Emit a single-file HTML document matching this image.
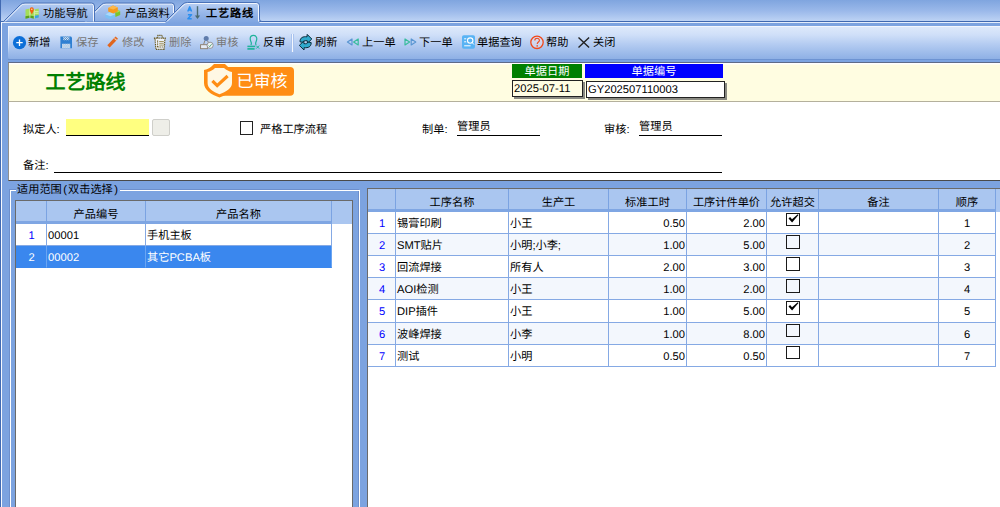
<!DOCTYPE html>
<html lang="zh-CN">
<head>
<meta charset="utf-8">
<title>工艺路线</title>
<style>
*{box-sizing:border-box;margin:0;padding:0}
html,body{width:1000px;height:507px;overflow:hidden}
body{text-rendering:geometricPrecision;position:relative;background:#7ca3e0;font-family:"Liberation Sans",sans-serif;font-size:11.2px;color:#000;line-height:1}
.abs{position:absolute}
#tabs{position:absolute;left:0;top:0;width:1000px;height:22px;background:linear-gradient(#7fa5df 0,#9bb9ea 50%,#c0d5f5 100%)}
#tabline{position:absolute;left:0;top:21px;width:1000px;height:1px;background:#3f68b0}
#tabline2{position:absolute;left:2px;top:22px;width:998px;height:1px;background:#e4edfb}
#leftedge{position:absolute;left:0;top:0;width:1px;height:507px;background:#416ab2}
#leftedge2{position:absolute;left:1px;top:22px;width:1px;height:485px;background:#f6f9fe}
.tabtxt{position:absolute;top:9px;white-space:nowrap}
#toolbar{position:absolute;left:8px;top:26px;width:992px;height:33px;background:linear-gradient(#dde9fb 0,#cfdff8 25%,#b3cbf1 55%,#8eb0e5 100%);border-top:1px solid #f2f6fd;border-radius:0 0 0 2px}
#tbleft{position:absolute;left:8px;top:26px;width:1px;height:28px;background:linear-gradient(#f2f6fd 0,#e6eefb 40%,rgba(200,216,245,0) 100%)}
#tbbot{position:absolute;left:8px;top:59px;width:992px;height:1px;background:#6d93d2}
.tb{position:absolute;top:38px;white-space:nowrap}
.tb.dis{color:#777}
#hdr{position:absolute;left:8px;top:61.500px;width:992px;height:40.300px;background:#fffde1;border-top:1px solid #5f6b88;border-left:1px solid #8f8f88;border-bottom:1.300px solid #b4b09c;box-shadow:inset 0 1.500px 0 #fff}
#title{position:absolute;left:45.500px;top:73px;font-family:"Liberation Serif",serif;font-weight:bold;font-size:20px;color:#008000;white-space:nowrap}
#form{position:absolute;left:8px;top:101.800px;width:992px;height:79.200px;background:#fff;border-left:1px solid #909090;border-bottom:1px solid #4a4a4a}
.lbl{position:absolute;white-space:nowrap}
.uline{position:absolute;height:1px;background:#000}
.grid{position:absolute;background:#fff;border:1px solid #6a6a6a;overflow:hidden}
.gh.f{border-bottom-color:#aac6f0;border-right:0}
.gh{position:absolute;top:0;background:#aac6f0;border-right:1px solid #7ba3e2;border-bottom:3px solid #7fa6e3;text-align:center;white-space:nowrap;overflow:hidden}
.c{position:absolute;height:22.130px;border-right:1px solid #85a9e4;border-bottom:1px solid #85a9e4;white-space:nowrap;overflow:hidden;padding:7px 0 0 1px}
.c.n{color:#00f;text-align:center;padding-left:1px}
.c.r{text-align:right;padding-right:1px}
.c.m{text-align:center;padding-left:0}
.cb{position:absolute;width:13.800px;height:13.600px;border:1.300px solid #1a1a1a}
</style>
</head>
<body>
<div id="tabs"></div>
<div id="tabline"></div><div id="tabline2"></div>
<svg class="abs" style="left:0;top:0" width="1000" height="24" viewBox="0 0 1000 24"><defs><linearGradient id="g1" x1="0" y1="0" x2="0" y2="1"><stop offset="0" stop-color="#b4ccf2"/><stop offset="1" stop-color="#8aade4"/></linearGradient><linearGradient id="g2" x1="0" y1="0" x2="0" y2="1"><stop offset="0" stop-color="#bad0f4"/><stop offset="0.45" stop-color="#9ab9ea"/><stop offset="1" stop-color="#7ca3e0"/></linearGradient></defs>
<path d="M84.5 21.5 L84.5 21.5 L101.5 4.5 Q103.0 3.0 106.0 3.0 L171.5 3.0 Q174.5 3.0 174.5 6.0 L174.5 21.5 Z" fill="url(#g1)"/><path d="M86.0 21.5 L102.0 5.5 Q103.2 4.0 106.0 4.0 L171.5 4.0 Q173.5 4.0 173.5 6.0 L173.5 21.5" fill="none" stroke="#f2f6fd" stroke-width="1"/><path d="M84.5 21.5 L101.5 4.5 Q103.0 3.0 106.0 3.0 L171.5 3.0 Q174.5 3.0 174.5 6.0 L174.5 21.5" fill="none" stroke="#4a72b8" stroke-width="1"/>
<path d="M3.5 21.5 L3.5 21.5 L20.5 4.5 Q22.0 3.0 25.0 3.0 L91.5 3.0 Q94.5 3.0 94.5 6.0 L94.5 21.5 Z" fill="url(#g1)"/><path d="M5.0 21.5 L21.0 5.5 Q22.2 4.0 25.0 4.0 L91.5 4.0 Q93.5 4.0 93.5 6.0 L93.5 21.5" fill="none" stroke="#f2f6fd" stroke-width="1"/><path d="M3.5 21.5 L20.5 4.5 Q22.0 3.0 25.0 3.0 L91.5 3.0 Q94.5 3.0 94.5 6.0 L94.5 21.5" fill="none" stroke="#4a72b8" stroke-width="1"/>
<path d="M165.5 23.5 L165.5 21.5 L183.0 4.0 Q184.5 2.5 187.5 2.5 L256.5 2.5 Q259.5 2.5 259.5 5.5 L259.5 23.5 Z" fill="url(#g2)"/><path d="M167.0 21.5 L183.5 5.0 Q184.7 3.5 187.5 3.5 L256.5 3.5 Q258.5 3.5 258.5 5.5 L258.5 21.5" fill="none" stroke="#f2f6fd" stroke-width="1"/><path d="M165.5 21.5 L183.0 4.0 Q184.5 2.5 187.5 2.5 L256.5 2.5 Q259.5 2.5 259.5 5.5 L259.5 19.0 Q259.5 21.5 262.0 21.5" fill="none" stroke="#4a72b8" stroke-width="1"/>
<path d="M25.5 9.6l4.4-1 4.4 1 4.4-1v9l-4.400 1-4.400-1-4.400 1z" fill="#a4de58"/><path d="M25.5 16.200l4.400-0.800 4.400 0.800v2.600l-4.400-1-4.400 1z" fill="#58a01e"/><path d="M34.300 15.800l4.400-0.800v2.600l-4.400 1z" fill="#3aa0e6"/><path d="M29.900 8.600v9.200M34.300 9.600v9" stroke="#e9f6d8" stroke-width="0.700" fill="none"/><path d="M34.600 11.600h4M34.600 13.200h4" stroke="#e9f6d8" stroke-width="0.700"/><path d="M31.800 14.400c-1-2.200-2-3.400-2-5a2 2.100 0 0 1 4 0c0 1.600-1 2.800-2 5z" fill="#f4600c"/><circle cx="31.800" cy="9.200" r="0.800" fill="#fbd9b8"/>
<path d="M105.200 14.200l5-2.200 5.200 2v3.800l-5 1.800-5.200-2z" fill="#7cc0f4"/><path d="M105.200 14.200l5.200 2 5-2-5.200-2.200z" fill="#a9d8fa"/><path d="M115.200 12.200l2.600-2.400 2.400 1.400v3.800l-4.800 2z" fill="#7cc42c"/><path d="M115.200 12.200l2.600-2.400 2.400 1.400-2.800 1.400z" fill="#a6e05a"/><path d="M108.200 8l4.800-2.400 4.800 2v4l-4.600 2-5-2.200z" fill="#f79a1c"/><path d="M108.200 8l4.800-2.400 4.800 2-4.600 1.800z" fill="#fdb84c"/>
<path d="M187.800 11.500L189.700 6.900L191.600 11.500M188.500 9.900h2.400" fill="none" stroke="#2b8ff0" stroke-width="1.500" stroke-linejoin="round"/><path d="M187.900 14.700h3.600l-3.600 4h3.800" fill="none" stroke="#2b8ff0" stroke-width="1.500" stroke-linejoin="round"/><path d="M197.500 6.200v10" stroke="#4a6a70" stroke-width="1.400"/><path d="M194.900 15.600h5.200l-2.600 3.400z" fill="#4a6a70"/>
</svg>
<div class="tabtxt" style="left:43px">功能导航</div>
<div class="tabtxt" style="left:125px">产品资料</div>
<div class="tabtxt" style="left:206px;font-weight:bold;letter-spacing:0.800px">工艺路线</div>

<div id="leftedge"></div><div id="leftedge2"></div>
<div id="toolbar"></div><div id="tbleft"></div><div id="tbbot"></div>
<svg class="abs" style="left:0;top:26px" width="640" height="33" viewBox="0 26 640 33">
<circle cx="19.5" cy="42.7" r="6.600" fill="#0d6fd8"/><path d="M19.500 39.500v6.400M16.300 42.700h6.400" stroke="#fff" stroke-width="1.300" fill="none"/>
<defs><pattern id="dt" width="1.860" height="1.860" patternUnits="userSpaceOnUse"><rect width="1.860" height="1.860" fill="#3a86d6"/><rect width="0.930" height="0.930" fill="#f4efe6"/><rect x="0.930" y="0.930" width="0.930" height="0.930" fill="#f4efe6"/></pattern></defs><path d="M60.400 36.600h10.600l1 1v10.600h-11.600z" fill="#2f80d2"/><rect x="63.200" y="36.600" width="6.200" height="3.600" fill="url(#dt)"/><rect x="62" y="43.800" width="8.200" height="4.400" fill="url(#dt)"/><rect x="62" y="43.800" width="8.200" height="4.400" fill="#fff" opacity="0.350"/>
<path d="M107.300 45.300l8.300-8.700 2.400 2.200-8.300 8.700z" fill="#e0661f"/><path d="M114.100 38.700l2.400 2.200 0.700-0.800-2.400-2.200z" fill="#f3cdb6"/>
<path d="M155 38.300l0.900 11h8.200l0.900-11z" fill="#eef2fa"/><path d="M153.900 38.200h12M157.300 38.200l0.600-2.800h4.200l0.600 2.800M155 38.600l0.900 10.700h8.200l0.900-10.700" fill="none" stroke="#66561c" stroke-width="1.200" stroke-dasharray="1.100 0.700"/><path d="M157.600 40.600v6.400h5.200" fill="none" stroke="#66561c" stroke-width="1.100" stroke-dasharray="1.100 0.700"/><path d="M159.200 41.500h4.600M159.200 43.300h4.600M159.200 45.100h4.600" stroke="#9a8c54" stroke-width="0.900"/>
<circle cx="206.200" cy="38.500" r="2.500" fill="#5f7cab"/><path d="M204.800 40.800L203.600 44.500M207.600 40.800L208.400 42.600" stroke="#8a7a66" stroke-width="0.900" fill="none"/><rect x="200.600" y="44.700" width="6.800" height="4" fill="#e4ebf7" stroke="#8a7a66" stroke-width="0.900"/><circle cx="210.100" cy="45.300" r="3.100" fill="#eef3f7" stroke="#8c8c8c" stroke-width="0.900"/><path d="M208.700 45.500l1 1.200 1.900-2.500" stroke="#4aa070" stroke-width="0.900" fill="none"/>
<path d="M250.800 45c1.800-1.800-0.600-3.400-0.600-6.200a3.300 3.400 0 0 1 6.600 0c0 2.800-2.400 4.400-0.600 6.200" fill="none" stroke="#1fb39a" stroke-width="1.200"/><path d="M247.400 46.400h7.800" stroke="#1fb39a" stroke-width="1.500"/><path d="M247.400 48.900h7.200" stroke="#1fb39a" stroke-width="1.700"/><path d="M256.200 45.600l3 3M259.200 45.600l-3 3" stroke="#1fb39a" stroke-width="1"/>
<rect x="291" y="34" width="1" height="18" fill="#a9c3ee"/><rect x="292" y="34" width="1" height="18" fill="#f3f7fe"/><rect x="293" y="34" width="1" height="18" fill="#a9c3ee"/>
<path d="M300 41.800C300 37.500 303 36.300 307 36.800L307.200 34.400L311.800 39L307.400 43.400L307.300 40.800C305 40.400 303.600 40.800 303.300 42.400Z" fill="#2fa9cc" stroke="#0c2c3c" stroke-width="1" stroke-linejoin="round"/><path d="M311.200 42.600C311.200 46.900 308.200 48.100 304.200 47.600L304 50L299.300 45.400L303.800 41L303.900 43.600C306.200 44 307.600 43.600 307.900 42Z" fill="#2fa9cc" stroke="#0c2c3c" stroke-width="1" stroke-linejoin="round"/>
<path d="M352 39v6l-4.600-3z" fill="none" stroke="#5a96d2" stroke-width="1.200" stroke-linejoin="round"/><path d="M358.200 39v6l-4.600-3z" fill="none" stroke="#38bc9c" stroke-width="1.200" stroke-linejoin="round"/>
<path d="M405 39v6l4.600-3z" fill="none" stroke="#38bc9c" stroke-width="1.200" stroke-linejoin="round"/><path d="M411.200 39v6l4.600-3z" fill="none" stroke="#5a96d2" stroke-width="1.200" stroke-linejoin="round"/>
<rect x="462" y="35.200" width="13" height="13.600" rx="1.800" fill="#58b3f4"/><circle cx="470.200" cy="40.600" r="2.700" fill="none" stroke="#fff" stroke-width="1.100"/><path d="M472.200 42.600l1.700 1.900M464.200 38.800h2M464.200 41.800h2M464.200 45.800h6.400" stroke="#fff" stroke-width="1"/>
<circle cx="537" cy="42.300" r="6.200" fill="#e9ddea" fill-opacity="0.500" stroke="#f0481a" stroke-width="1.300"/><path d="M534.800 40.600c0-3 4.600-3 4.600-0.200 0 1.600-2.200 1.600-2.200 3.600" fill="none" stroke="#f0481a" stroke-width="1.100"/><rect x="536.500" y="45.200" width="1.400" height="1.400" fill="#f0481a"/>
<path d="M578.500 37.600l10.600 10M589.100 37.600l-10.600 10" stroke="#222" stroke-width="1.400"/>
</svg>
<div class="tb" style="left:28px">新增</div>
<div class="tb dis" style="left:76px">保存</div>
<div class="tb dis" style="left:122px">修改</div>
<div class="tb dis" style="left:169px">删除</div>
<div class="tb dis" style="left:216px">审核</div>
<div class="tb" style="left:263px">反审</div>
<div class="tb" style="left:315px">刷新</div>
<div class="tb" style="left:362px">上一单</div>
<div class="tb" style="left:419px">下一单</div>
<div class="tb" style="left:477px">单据查询</div>
<div class="tb" style="left:546px">帮助</div>
<div class="tb" style="left:593px">关闭</div>

<div id="hdr"></div>
<div id="title">工艺路线</div>

<svg class="abs" style="left:200px;top:62px" width="100" height="38" viewBox="200 62 100 38">
<rect x="214" y="67" width="80" height="28.800" rx="4" fill="#ff8d14"/>
<path d="M214 64H225C228 67 231 69.500 235 70V83C235 90 228 94.500 219.500 97.500C211 94.500 204 90 204 83V70C208 69.500 211 67 214 64Z" fill="#ff8d14"/>
<path d="M215 68H224C226.500 70 229 71.500 232 72V83C232 88.500 226 91.800 219.500 94.200C213 91.800 207.600 88.500 207.600 83V72C210.500 71.500 213 70 215 68Z" fill="#fff8e4"/>
<path d="M212.400 80.800L217.200 85.600L227.600 76" fill="none" stroke="#ff8d14" stroke-width="3.200"/>
</svg>
<div class="abs" style="left:236.500px;top:72.500px;font-size:17px;color:#fff;white-space:nowrap;font-weight:normal">已审核</div>
<div class="abs" style="left:512px;top:64px;width:70px;height:14px;background:#008000;color:#fff;text-align:center;padding-top:3px">单据日期</div>
<div class="abs" style="left:585px;top:64px;width:138px;height:14px;background:#0000ff;color:#fff;text-align:center;padding-top:3px">单据编号</div>
<div class="abs" style="left:512px;top:80px;width:71px;height:16.500px;background:#fffde3;border:1px solid #222;box-shadow:2px 2px 0 #8a8a82;padding:3px 0 0 1px;white-space:nowrap">2025-07-11</div>
<div class="abs" style="left:586px;top:81px;width:139px;height:16.500px;background:#fff;border:1px solid #222;box-shadow:2px 2px 0 #8a8a82;padding:3px 0 0 1px;white-space:nowrap">GY202507110003</div>

<div id="form"></div>

<div class="lbl" style="left:23px;top:124.500px">拟定人:</div>
<div class="abs" style="left:66px;top:119.400px;width:82.800px;height:16px;background:#ffff80"></div>
<div class="uline" style="left:66px;top:135px;width:82.800px"></div>
<div class="abs" style="left:152.400px;top:118.500px;width:17.200px;height:17px;background:#eeeee8;border:1px solid #cfcfca;border-radius:2px"></div>
<div class="cb" style="left:239.500px;top:121.300px;width:13.800px;height:13.500px;border-width:1.200px;border-color:#222"></div>
<div class="lbl" style="left:260px;top:124.500px">严格工序流程</div>
<div class="lbl" style="left:422px;top:124.500px">制单:</div>
<div class="lbl" style="left:457px;top:122px">管理员</div>
<div class="uline" style="left:457px;top:135px;width:83px"></div>
<div class="lbl" style="left:604px;top:124.500px">审核:</div>
<div class="lbl" style="left:639px;top:122px">管理员</div>
<div class="uline" style="left:639px;top:135px;width:83px"></div>
<div class="lbl" style="left:23px;top:160.500px">备注:</div>
<div class="uline" style="left:54px;top:172px;width:668px"></div>


<div class="abs" style="left:9px;top:189px;width:350px;height:330px;border:1px solid #6d8fcc"></div>
<div class="abs" style="left:10px;top:190px;width:350px;height:330px;border:1px solid #fff"></div>
<div class="abs" style="left:16px;top:184.500px;height:12px;background:#7ca3e0;padding:0 2px 0 1px;white-space:nowrap">适用范围<span style="margin:0 1px 0 1.500px">(</span>双击选择<span style="margin-left:1.500px">)</span></div>
<div class="grid" id="lg" style="left:15px;top:200px;width:338px;height:320px">
<div class="gh" style="left:0px;width:31px;height:23px;padding-top:8.5px"></div>
<div class="gh" style="left:31px;width:99px;height:23px;padding-top:8.5px">产品编号</div>
<div class="gh" style="left:130px;width:186px;height:23px;padding-top:8.5px">产品名称</div>
<div class="gh f" style="left:316px;width:20px;height:23px;padding-top:8.5px"></div>
<div class="c n" style="left:0;top:22.9px;width:31px;">1</div><div class="c" style="left:31px;top:22.9px;width:99px;">00001</div><div class="c" style="left:130px;top:22.9px;width:186px;">手机主板</div>
<div class="c n" style="left:0;top:45.03px;width:31px;background:#3a87ee;color:#fff;border-color:#6aa5f2 #6aa5f2 #3a87ee #6aa5f2;">2</div><div class="c" style="left:31px;top:45.03px;width:99px;background:#3a87ee;color:#fff;border-color:#6aa5f2 #6aa5f2 #3a87ee #6aa5f2;">00002</div><div class="c" style="left:130px;top:45.03px;width:186px;background:#3a87ee;color:#fff;border-color:#6aa5f2 #6aa5f2 #3a87ee #6aa5f2;">其它PCBA板</div>
</div>
<div class="grid" id="rg" style="left:367px;top:188px;width:640px;height:330px">
<div class="gh" style="left:0px;width:28px;height:23px;padding-top:9px"></div>
<div class="gh" style="left:28px;width:113px;height:23px;padding-top:9px">工序名称</div>
<div class="gh" style="left:141px;width:100px;height:23px;padding-top:9px">生产工</div>
<div class="gh" style="left:241px;width:78px;height:23px;padding-top:9px">标准工时</div>
<div class="gh" style="left:319px;width:80px;height:23px;padding-top:9px">工序计件单价</div>
<div class="gh" style="left:399px;width:52px;height:23px;padding-top:9px">允许超交</div>
<div class="gh" style="left:451px;width:120px;height:23px;padding-top:9px">备注</div>
<div class="gh" style="left:571px;width:57px;height:23px;padding-top:9px">顺序</div>
<div class="gh f" style="left:628px;width:12px;height:23px;padding-top:9px"></div>
<div class="c n" style="left:0px;top:22.9px;width:28px;">1</div><div class="c" style="left:28px;top:22.9px;width:113px;">锡膏印刷</div><div class="c" style="left:141px;top:22.9px;width:100px;">小王</div><div class="c r" style="left:241px;top:22.9px;width:78px;">0.50</div><div class="c r" style="left:319px;top:22.9px;width:80px;">2.00</div><div class="c m" style="left:399px;top:22.9px;width:52px;"><span class="cb" style="left:19px;top:1px"><svg width="12" height="11" viewBox="0 0 12 11" style="position:absolute;left:0;top:0"><path d="M1.500 4.500L3.100 3.100L5 5.300L10.800 0.200L11.500 0.900L5.100 8.500Z" fill="#000"/></svg></span></div><div class="c" style="left:451px;top:22.9px;width:120px;"></div><div class="c m" style="left:571px;top:22.9px;width:57px;">1</div>
<div class="c n" style="left:0px;top:45.03px;width:28px;background:#f3f7fd;">2</div><div class="c" style="left:28px;top:45.03px;width:113px;background:#f3f7fd;">SMT贴片</div><div class="c" style="left:141px;top:45.03px;width:100px;background:#f3f7fd;">小明;小李;</div><div class="c r" style="left:241px;top:45.03px;width:78px;background:#f3f7fd;">1.00</div><div class="c r" style="left:319px;top:45.03px;width:80px;background:#f3f7fd;">5.00</div><div class="c m" style="left:399px;top:45.03px;width:52px;background:#f3f7fd;"><span class="cb" style="left:19px;top:1px"></span></div><div class="c" style="left:451px;top:45.03px;width:120px;background:#f3f7fd;"></div><div class="c m" style="left:571px;top:45.03px;width:57px;background:#f3f7fd;">2</div>
<div class="c n" style="left:0px;top:67.16px;width:28px;">3</div><div class="c" style="left:28px;top:67.16px;width:113px;">回流焊接</div><div class="c" style="left:141px;top:67.16px;width:100px;">所有人</div><div class="c r" style="left:241px;top:67.16px;width:78px;">2.00</div><div class="c r" style="left:319px;top:67.16px;width:80px;">3.00</div><div class="c m" style="left:399px;top:67.16px;width:52px;"><span class="cb" style="left:19px;top:1px"></span></div><div class="c" style="left:451px;top:67.16px;width:120px;"></div><div class="c m" style="left:571px;top:67.16px;width:57px;">3</div>
<div class="c n" style="left:0px;top:89.29px;width:28px;background:#f3f7fd;">4</div><div class="c" style="left:28px;top:89.29px;width:113px;background:#f3f7fd;">AOI检测</div><div class="c" style="left:141px;top:89.29px;width:100px;background:#f3f7fd;">小王</div><div class="c r" style="left:241px;top:89.29px;width:78px;background:#f3f7fd;">1.00</div><div class="c r" style="left:319px;top:89.29px;width:80px;background:#f3f7fd;">2.00</div><div class="c m" style="left:399px;top:89.29px;width:52px;background:#f3f7fd;"><span class="cb" style="left:19px;top:1px"></span></div><div class="c" style="left:451px;top:89.29px;width:120px;background:#f3f7fd;"></div><div class="c m" style="left:571px;top:89.29px;width:57px;background:#f3f7fd;">4</div>
<div class="c n" style="left:0px;top:111.42px;width:28px;">5</div><div class="c" style="left:28px;top:111.42px;width:113px;">DIP插件</div><div class="c" style="left:141px;top:111.42px;width:100px;">小王</div><div class="c r" style="left:241px;top:111.42px;width:78px;">1.00</div><div class="c r" style="left:319px;top:111.42px;width:80px;">5.00</div><div class="c m" style="left:399px;top:111.42px;width:52px;"><span class="cb" style="left:19px;top:1px"><svg width="12" height="11" viewBox="0 0 12 11" style="position:absolute;left:0;top:0"><path d="M1.500 4.500L3.100 3.100L5 5.300L10.800 0.200L11.500 0.900L5.100 8.500Z" fill="#000"/></svg></span></div><div class="c" style="left:451px;top:111.42px;width:120px;"></div><div class="c m" style="left:571px;top:111.42px;width:57px;">5</div>
<div class="c n" style="left:0px;top:133.55px;width:28px;background:#f3f7fd;">6</div><div class="c" style="left:28px;top:133.55px;width:113px;background:#f3f7fd;">波峰焊接</div><div class="c" style="left:141px;top:133.55px;width:100px;background:#f3f7fd;">小李</div><div class="c r" style="left:241px;top:133.55px;width:78px;background:#f3f7fd;">1.00</div><div class="c r" style="left:319px;top:133.55px;width:80px;background:#f3f7fd;">8.00</div><div class="c m" style="left:399px;top:133.55px;width:52px;background:#f3f7fd;"><span class="cb" style="left:19px;top:1px"></span></div><div class="c" style="left:451px;top:133.55px;width:120px;background:#f3f7fd;"></div><div class="c m" style="left:571px;top:133.55px;width:57px;background:#f3f7fd;">6</div>
<div class="c n" style="left:0px;top:155.68px;width:28px;">7</div><div class="c" style="left:28px;top:155.68px;width:113px;">测试</div><div class="c" style="left:141px;top:155.68px;width:100px;">小明</div><div class="c r" style="left:241px;top:155.68px;width:78px;">0.50</div><div class="c r" style="left:319px;top:155.68px;width:80px;">0.50</div><div class="c m" style="left:399px;top:155.68px;width:52px;"><span class="cb" style="left:19px;top:1px"></span></div><div class="c" style="left:451px;top:155.68px;width:120px;"></div><div class="c m" style="left:571px;top:155.68px;width:57px;">7</div>
</div>

</body>
</html>
